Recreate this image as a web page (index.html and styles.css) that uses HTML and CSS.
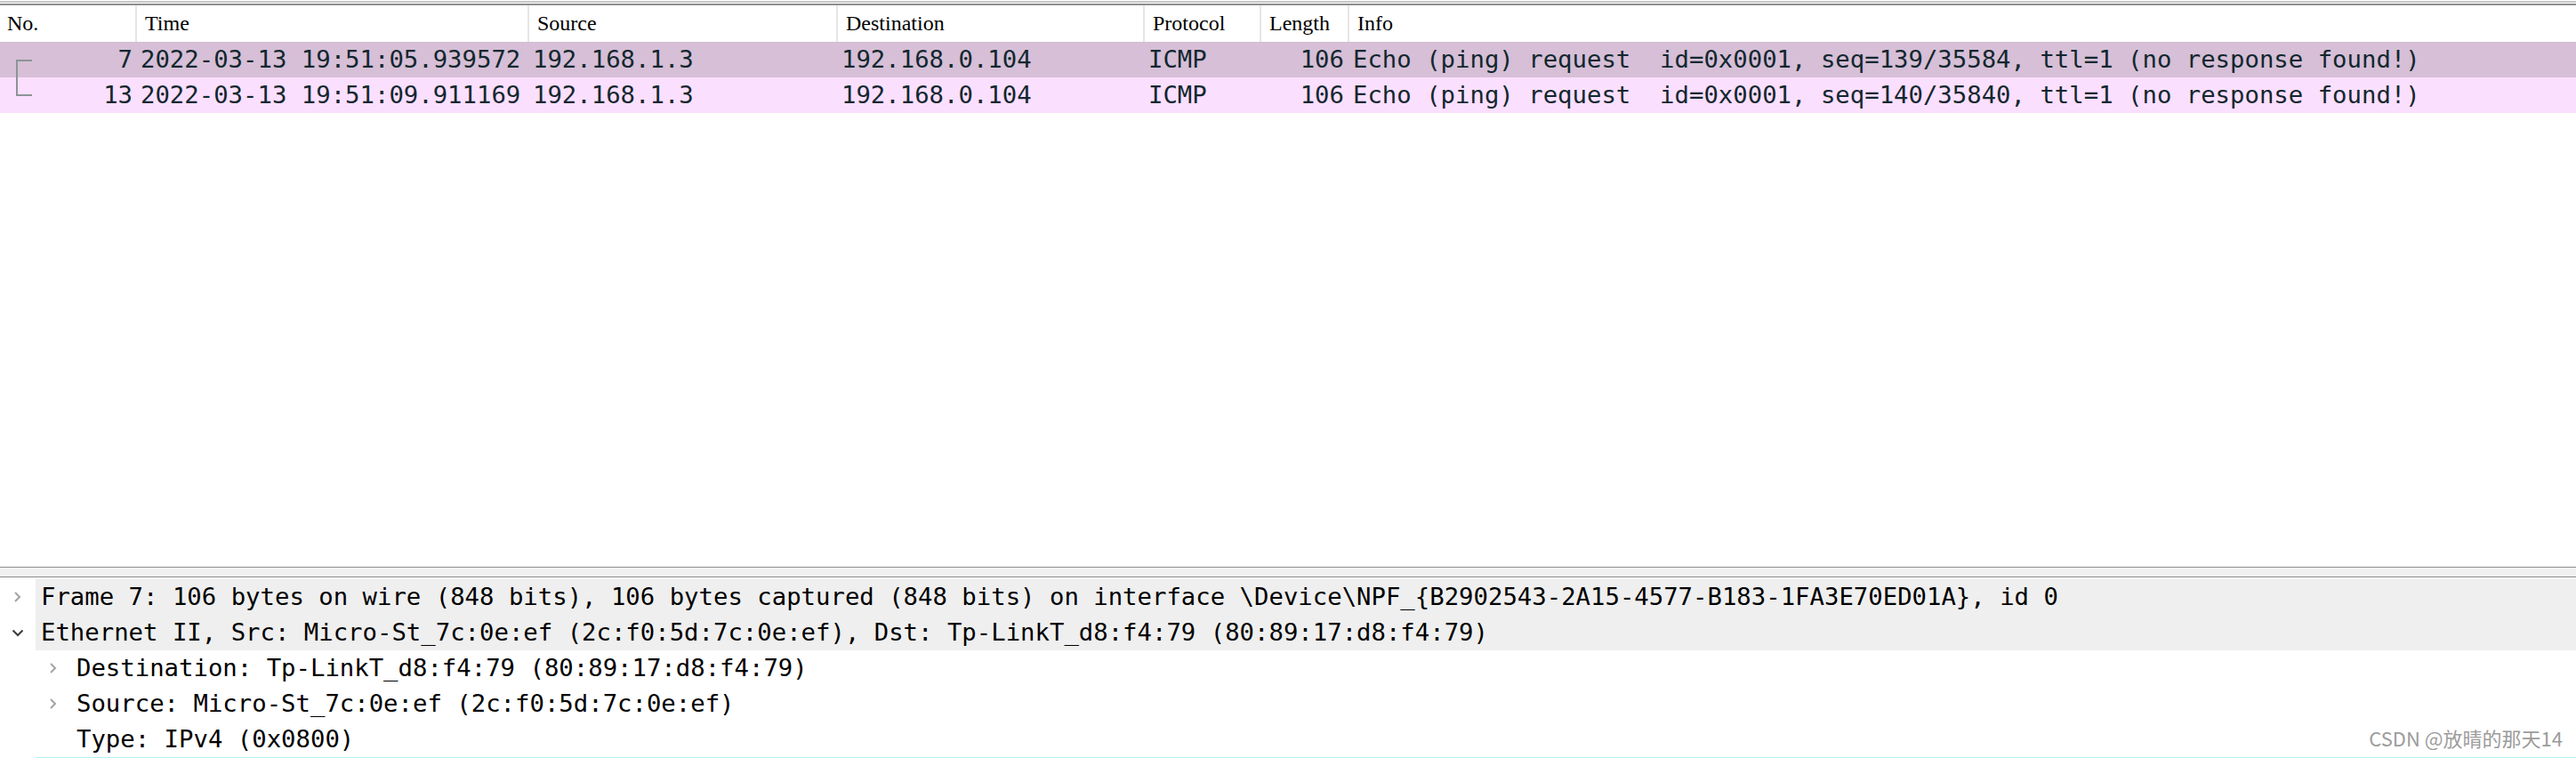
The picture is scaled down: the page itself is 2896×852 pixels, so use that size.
FILE: index.html
```html
<!DOCTYPE html>
<html>
<head>
<meta charset="utf-8">
<link rel="stylesheet" href="styles.css">
</head>
<body>
<div class="app">
  <section class="packet-list">
    <div class="frame-top"></div>
    <div class="list-header">
      <div class="hcell">No.</div>
      <div class="hcell">Time</div>
      <div class="hcell">Source</div>
      <div class="hcell">Destination</div>
      <div class="hcell">Protocol</div>
      <div class="hcell">Length</div>
      <div class="hcell">Info</div>
    </div>
    <div class="prow prow-sel">
      <div class="cell num">7<span class="related related-first"></span></div>
      <div class="cell">2022-03-13 19:51:05.939572</div>
      <div class="cell">192.168.1.3</div>
      <div class="cell">192.168.0.104</div>
      <div class="cell">ICMP</div>
      <div class="cell num">106</div>
      <div class="cell info">Echo (ping) request  id=0x0001, seq=139/35584, ttl=1 (no response found!)</div>
    </div>
    <div class="prow prow-icmp">
      <div class="cell num">13</div>
      <div class="cell">2022-03-13 19:51:09.911169</div>
      <div class="cell">192.168.1.3</div>
      <div class="cell">192.168.0.104</div>
      <div class="cell">ICMP</div>
      <div class="cell num">106</div>
      <div class="cell info">Echo (ping) request  id=0x0001, seq=140/35840, ttl=1 (no response found!)</div>
    </div>
  </section>
  <div class="splitter"></div>
  <section class="tree">
    <div class="trow lvl0">
      <span class="twisty"><svg width="10" height="12" viewBox="0 0 10 12"><polyline points="2,1 7,6 2,11" class="chev-closed"/></svg></span>
      <span class="tlabel shaded">Frame 7: 106 bytes on wire (848 bits), 106 bytes captured (848 bits) on interface \Device\NPF_{B2902543-2A15-4577-B183-1FA3E70ED01A}, id 0</span>
    </div>
    <div class="trow lvl0">
      <span class="twisty"><svg width="14" height="9" viewBox="0 0 14 9"><polyline points="1.5,1.5 7,7 12.5,1.5" class="chev-open"/></svg></span>
      <span class="tlabel shaded">Ethernet II, Src: Micro-St_7c:0e:ef (2c:f0:5d:7c:0e:ef), Dst: Tp-LinkT_d8:f4:79 (80:89:17:d8:f4:79)</span>
    </div>
    <div class="trow lvl1">
      <span class="twisty"><svg width="10" height="12" viewBox="0 0 10 12"><polyline points="2,1 7,6 2,11" class="chev-closed"/></svg></span>
      <span class="tlabel">Destination: Tp-LinkT_d8:f4:79 (80:89:17:d8:f4:79)</span>
    </div>
    <div class="trow lvl1">
      <span class="twisty"><svg width="10" height="12" viewBox="0 0 10 12"><polyline points="2,1 7,6 2,11" class="chev-closed"/></svg></span>
      <span class="tlabel">Source: Micro-St_7c:0e:ef (2c:f0:5d:7c:0e:ef)</span>
    </div>
    <div class="trow lvl1">
      <span class="twisty"></span>
      <span class="tlabel">Type: IPv4 (0x0800)</span>
    </div>
    <div class="trow lvl0 trow-next"></div>
  </section>
  <div class="watermark">CSDN @放晴的那天14</div>
</div>
</body>
</html>
```
FILE: styles.css
```css
html, body {
  margin: 0;
  padding: 0;
  background: #ffffff;
}
body {
  width: 2896px;
  height: 852px;
  overflow: hidden;
}
.app {
  position: relative;
  width: 2896px;
  height: 852px;
  display: flex;
  flex-direction: column;
}
.packet-list {
  height: 637px;
  flex: none;
}
.frame-top {
  margin-top: 1px;
  height: 1px;
  border-top: 2px solid #c6c6c6;
  border-bottom: 2px solid #8f8f8f;
}
.list-header,
.prow {
  display: grid;
  grid-template-columns: 152px 441px 347px 345px 131px 99px 1fr;
}
.list-header {
  height: 41px;
  font-family: "Liberation Serif", serif;
  font-size: 24px;
  color: #000;
}
.hcell {
  display: flex;
  align-items: center;
  padding-left: 9px;
  border-left: 2px solid #e6e6e6;
  white-space: nowrap;
}
.hcell:first-child {
  border-left: none;
  padding-left: 8px;
}
.prow {
  height: 40px;
  font-family: "DejaVu Sans Mono", monospace;
  font-size: 27.3px;
  line-height: 40px;
  color: #12272e;
}
.prow-sel {
  background: #d6bfd7;
}
.prow-icmp {
  background: #fbdffe;
}
.cell {
  padding-left: 6px;
  white-space: pre;
  overflow: visible;
}
.cell.num {
  text-align: right;
  padding-left: 0;
  padding-right: 4px;
}
.cell:first-child {
  position: relative;
  padding-right: 3px;
}
.related {
  position: absolute;
  left: 18px;
  top: 20px;
  width: 16px;
  height: 37px;
  border: 2px solid #8c9494;
  border-right: none;
}
.splitter {
  flex: none;
  height: 10px;
  background: #f0f0f0;
  border-top: 1px solid #8c8c8c;
  border-bottom: 1px solid #8c8c8c;
  margin-bottom: 2px;
}
.tree {
  font-family: "DejaVu Sans Mono", monospace;
  font-size: 27.3px;
  color: #000;
}
.trow {
  display: flex;
  height: 40px;
  line-height: 40px;
}
.trow.lvl1 {
  padding-left: 40px;
}
.twisty {
  flex: none;
  width: 40px;
  display: flex;
  align-items: center;
  justify-content: center;
}
.twisty svg {
  display: block;
}
.chev-closed {
  fill: none;
  stroke: #a3a3a3;
  stroke-width: 2;
}
.chev-open {
  fill: none;
  stroke: #3c3c3c;
  stroke-width: 2;
}
.tlabel {
  flex: 1;
  padding-left: 6px;
  white-space: pre;
}
.tlabel.shaded {
  background: #efefef;
}
.trow-next {
  margin-left: 40px;
  border-top: 2px solid #b4f2f2;
}
.watermark {
  position: absolute;
  right: 15px;
  bottom: 7px;
  font-family: "Noto Sans CJK SC", "Noto Sans", sans-serif;
  font-size: 22px;
  color: #9c9c9c;
  text-shadow: 0 0 1px #ffffff;
}
```
